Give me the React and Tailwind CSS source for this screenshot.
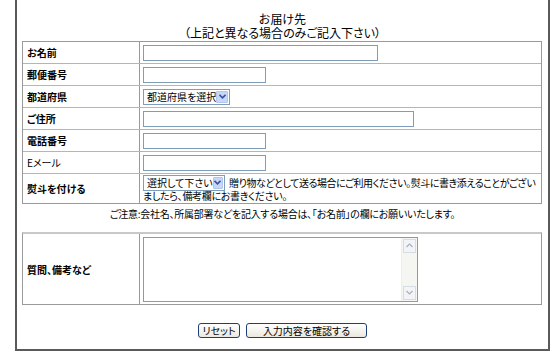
import React from "react";

function Select({ text, w }) {
  return (
    <span className={`inline-flex items-center h-[16px] border border-[#7f9db9] bg-white pl-[3px] pr-[1px] shrink-0 ${w}`}>
      <span className="flex-1 text-[10px] leading-[14px] whitespace-nowrap">{text}</span>
      <span className="flex items-center justify-center w-[13px] h-[12px] bg-[#c7d7f8] border border-[#b3c6ee] rounded-[1px]">
        <svg width="7" height="5" viewBox="0 0 7 5">
          <path d="M0.5 0.8 L3.5 3.8 L6.5 0.8" fill="none" stroke="#3a52a0" strokeWidth="1.6" />
        </svg>
      </span>
    </span>
  );
}

function Input({ w }) {
  return <div className={`h-[16px] border border-[#7f9db9] bg-white ${w}`} />;
}

const rows = [
  { label: "お名前", el: <Input w="w-[235px]" /> },
  { label: "郵便番号", el: <Input w="w-[123px]" /> },
  { label: "都道府県", el: <Select text="都道府県を選択" w="w-[87px]" /> },
  { label: "ご住所", el: <Input w="w-[271px]" /> },
  { label: "電話番号", el: <Input w="w-[123px]" /> },
  { label: "Eメール", el: <Input w="w-[123px]" />, normal: true },
];

export default function App() {
  return (
    <div className="w-[560px] h-[359px] bg-white text-black font-['Noto_Sans_CJK_JP',sans-serif] [font-feature-settings:'palt']">
      <div className="ml-[15px] w-[535px] h-[351px] border-l-2 border-r-2 border-b-2 border-[#5a5a5a]">
        <div className="pt-[12px] text-center text-[12px] leading-[14px]">
          <div>お届け先</div>
          <div>（上記と異なる場合のみご記入下さい）</div>
        </div>
        <div className="mt-[1px] ml-[5px] w-[520px] border border-[#9a9a9a]">
          {rows.map((r) => (
            <div key={r.label} className="flex h-[22px] border-b border-[#b5b5b5]">
              <div className={`w-[117px] border-r border-[#9a9a9a] flex items-center pl-[4px] text-[10px] ${r.normal ? "font-normal" : "font-bold"}`}>
                {r.label}
              </div>
              <div className="flex-1 flex items-center pl-[3px]">{r.el}</div>
            </div>
          ))}
          <div className="flex h-[29px]">
            <div className="w-[117px] border-r border-[#9a9a9a] flex items-center pl-[4px] text-[10px] font-bold">
              熨斗を付ける
            </div>
            <div className="flex-1 flex flex-col justify-center pl-[3px] pr-[2px] text-[10px]">
              <div className="flex items-center h-[15px]">
                <Select text="選択して下さい" w="w-[82px]" />
                <span className="ml-[4px] whitespace-nowrap leading-[12px] tracking-[-0.45px]">
                  贈り物などとして送る場合にご利用ください。熨斗に書き添えることがござい
                </span>
              </div>
              <div className="leading-[12px] whitespace-nowrap tracking-[-0.3px]">ましたら、備考欄にお書きください。</div>
            </div>
          </div>
        </div>
        <div className="mt-[3px] text-center text-[10px] leading-[14px] tracking-[-0.25px]">
          ご注意:会社名、所属部署などを記入する場合は、「お名前」の欄にお願いいたします。
        </div>
        <div className="mt-[11px] ml-[5px] w-[520px] border border-[#9a9a9a] border-t-2 border-t-[#c8c8c8]">
          <div className="flex h-[70px]">
            <div className="w-[117px] border-r border-[#9a9a9a] flex items-center pl-[4px] text-[10px] font-bold">
              質問、備考など
            </div>
            <div className="flex-1 flex items-center pl-[3px]">
              <div className="w-[275px] h-[65px] border border-[#7f9db9] bg-white flex justify-end">
                <div className="w-[16px] h-full bg-[#f5f6f1] border-l border-[#eeeeee] flex flex-col justify-between p-[1px]">
                  <div className="h-[14px] border border-[#d6dbe4] bg-[#f3f4f7] flex items-center justify-center">
                    <svg width="7" height="5" viewBox="0 0 7 5">
                      <path d="M0.5 4 L3.5 1 L6.5 4" fill="none" stroke="#a8afc0" strokeWidth="1.2" />
                    </svg>
                  </div>
                  <div className="h-[14px] border border-[#d6dbe4] bg-[#f3f4f7] flex items-center justify-center">
                    <svg width="7" height="5" viewBox="0 0 7 5">
                      <path d="M0.5 1 L3.5 4 L6.5 1" fill="none" stroke="#a8afc0" strokeWidth="1.2" />
                    </svg>
                  </div>
                </div>
              </div>
            </div>
          </div>
        </div>
        <div className="mt-[18px] flex justify-center gap-[6px]">
          <div className="w-[42px] h-[15px] border border-[#1c3f78] rounded-[3px] bg-gradient-to-b from-white to-[#ebe9de] flex items-center justify-center text-[10px] leading-[12px]">
            リセット
          </div>
          <div className="w-[121px] h-[15px] border border-[#1c3f78] rounded-[3px] bg-gradient-to-b from-white to-[#ebe9de] flex items-center justify-center text-[10px] leading-[12px]">
            入力内容を確認する
          </div>
        </div>
      </div>
    </div>
  );
}
